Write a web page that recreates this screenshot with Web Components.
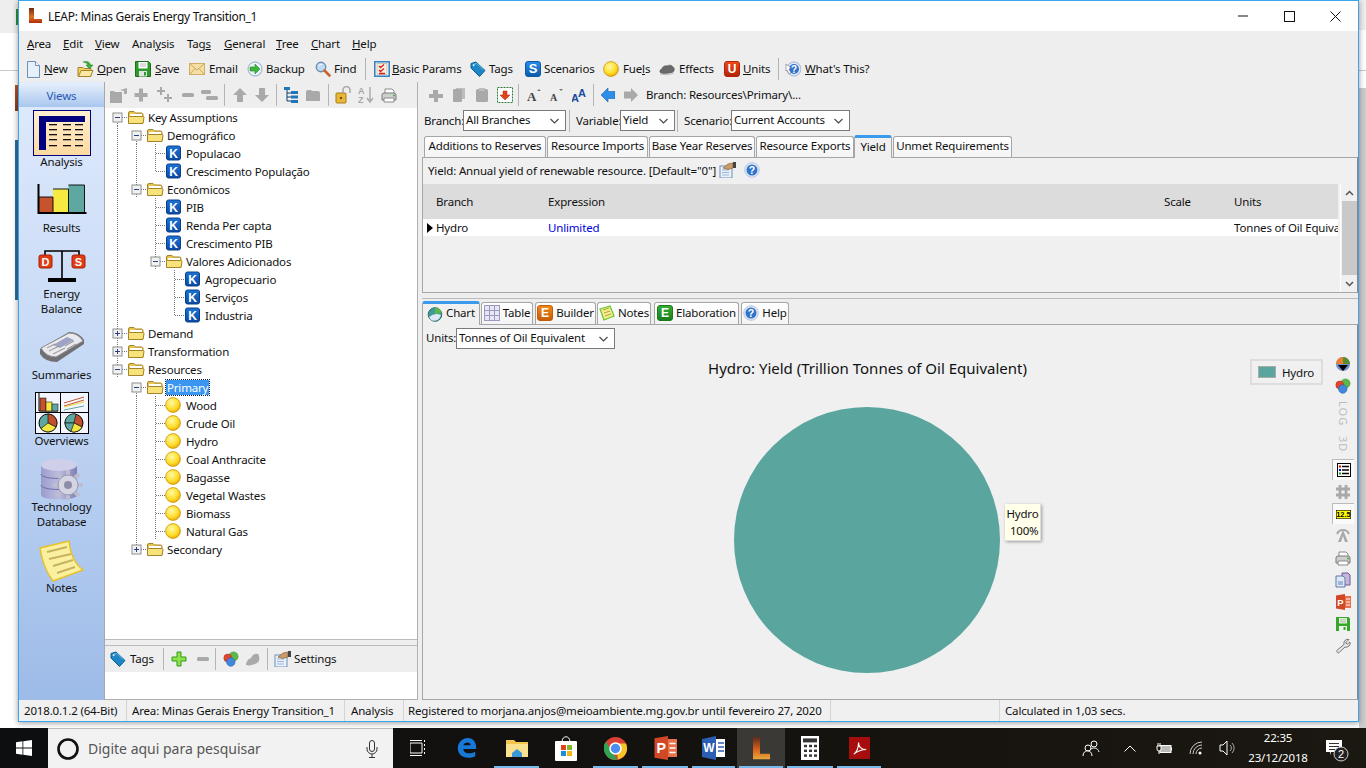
<!DOCTYPE html>
<html lang="en"><head><meta charset="utf-8"><title>LEAP</title>
<style>
html,body{margin:0;padding:0;width:1366px;height:768px;overflow:hidden;background:#fff}
body{font:11.5px/15px "Noto Sans","Open Sans",sans-serif;letter-spacing:-.17px;color:#111;display:flex;flex-direction:column}
</style></head><body>
<desk-area>
<side-strip></side-strip>
<app-window>
  <title-bar>LEAP: Minas Gerais Energy Transition_1</title-bar>
  <menu-bar>
    <m-item w="36"><u>A</u>rea</m-item><m-item w="32"><u>E</u>dit</m-item><m-item w="37"><u>V</u>iew</m-item><m-item w="55">Anal<u>y</u>sis</m-item><m-item w="37">Tag<u>s</u></m-item><m-item w="52"><u>G</u>eneral</m-item><m-item w="35"><u>T</u>ree</m-item><m-item w="41"><u>C</u>hart</m-item><m-item w="40"><u>H</u>elp</m-item>
  </menu-bar>
  <tool-bar pad="6" h="26">
    <t-btn n="new" w="52" g="3"><u>N</u>ew</t-btn><t-btn n="open" w="58" g="3"><u>O</u>pen</t-btn><t-btn n="save" w="54"><u>S</u>ave</t-btn><t-btn n="email" w="58">Email</t-btn><t-btn n="backup" w="68" g="3">Backup</t-btn><t-btn n="find" w="50" g="3">Find</t-btn><t-sep style="margin-right:8px"></t-sep>
    <t-btn n="params" w="96" g="2"><u>B</u>asic Params</t-btn><t-btn n="tag" w="55" g="3">Tags</t-btn><t-btn n="scen" w="78" g="3">Scenarios</t-btn><t-btn n="fuel" w="56">Fue<u>l</u>s</t-btn><t-btn n="cloud" w="65">Effects</t-btn><t-btn n="units" w="54" g="3"><u>U</u>nits</t-btn><t-sep style="margin-right:6px"></t-sep>
    <t-btn n="what" w="100"><u>W</u>hat's This?</t-btn>
  </tool-bar>
  <work-area>
    <views-panel>
      <view-item n="vanalysis" sel t="0" g="-2">Analysis</view-item>
      <view-item n="vresults" t="15" g="6">Results</view-item>
      <view-item n="vbalance" t="13" g="2">Energy<br>Balance</view-item>
      <view-item n="vsummary" t="15" g="4">Summaries</view-item>
      <view-item n="voverview" t="10" g="-1">Overviews</view-item>
      <view-item n="vdb" t="10" g="-2">Technology<br>Database</view-item>
      <view-item n="vnotes" t="11" g="-2">Notes</view-item>
    </views-panel>
    <tree-panel>
      <tool-bar pad="5" h="26" slot="top">
        <x-ic n="gfolderadd" w="23"></x-ic><x-ic n="gplus" w="22"></x-ic><x-ic n="gspark" w="25"></x-ic><x-ic n="gminus" w="21"></x-ic><x-ic n="gminus2" w="23"></x-ic><t-sep style="margin-right:7px"></t-sep>
        <x-ic n="gup" w="22"></x-ic><x-ic n="gdown" w="22"></x-ic><t-sep style="margin-right:7px"></t-sep>
        <x-ic n="btree" w="21"></x-ic><x-ic n="gfolder" w="23"></x-ic><t-sep style="margin-right:6px"></t-sep>
        <x-ic n="lock" w="23"></x-ic><x-ic n="gaz" w="23"></x-ic><x-ic n="print" w="20"></x-ic>
      </tool-bar>
      <tree-row g="m" i="folder">Key Assumptions</tree-row>
      <tree-row g="|m" i="folder">Demográfico</tree-row>
      <tree-row g="||T" i="k">Populacao</tree-row>
      <tree-row g="||L" i="k">Crescimento População</tree-row>
      <tree-row g="|e" i="folder">Econômicos</tree-row>
      <tree-row g="| T" i="k">PIB</tree-row>
      <tree-row g="| T" i="k">Renda Per capta</tree-row>
      <tree-row g="| T" i="k">Crescimento PIB</tree-row>
      <tree-row g="| e" i="folder">Valores Adicionados</tree-row>
      <tree-row g="|  T" i="k">Agropecuario</tree-row>
      <tree-row g="|  T" i="k">Serviços</tree-row>
      <tree-row g="|  L" i="k">Industria</tree-row>
      <tree-row g="p" i="folder">Demand</tree-row>
      <tree-row g="p" i="folder">Transformation</tree-row>
      <tree-row g="e" i="folder">Resources</tree-row>
      <tree-row g=" m" i="folder" sel>Primary</tree-row>
      <tree-row g=" |T" i="fuel">Wood</tree-row>
      <tree-row g=" |T" i="fuel">Crude Oil</tree-row>
      <tree-row g=" |T" i="fuel">Hydro</tree-row>
      <tree-row g=" |T" i="fuel">Coal Anthracite</tree-row>
      <tree-row g=" |T" i="fuel">Bagasse</tree-row>
      <tree-row g=" |T" i="fuel">Vegetal Wastes</tree-row>
      <tree-row g=" |T" i="fuel">Biomass</tree-row>
      <tree-row g=" |T" i="fuel">Natural Gas</tree-row>
      <tree-row g=" P" i="folder">Secondary</tree-row>
      <tool-bar pad="5" h="26" slot="bottom">
        <t-btn n="tag" w="53" g="4">Tags</t-btn><t-sep style="margin-right:7px"></t-sep>
        <x-ic n="plusgreen" w="24"></x-ic><x-ic n="gminus" w="20"></x-ic><t-sep style="margin-right:7px"></t-sep>
        <x-ic n="colors" w="22"></x-ic><x-ic n="gcloud" w="22"></x-ic><t-sep style="margin-right:6px"></t-sep>
        <t-btn n="settings" w="90" g="2">Settings</t-btn>
      </tool-bar>
    </tree-panel>
    <main-panel>
      <tool-bar pad="6" h="26">
        <x-ic n="gpuzzle" w="23"></x-ic><x-ic n="gcopy" w="23"></x-ic><x-ic n="gpaste" w="23"></x-ic><x-ic n="redin" w="21"></x-ic><t-sep style="margin-right:8px"></t-sep>
        <x-ic n="aup" w="22"></x-ic><x-ic n="adown" w="23"></x-ic><x-ic n="aa" w="21"></x-ic><t-sep style="margin-right:7px"></t-sep>
        <x-ic n="back" w="23"></x-ic><x-ic n="fwd" w="22"></x-ic><span style="padding-bottom:2px">Branch: Resources\Primary\...</span>
      </tool-bar>
      <tool-bar pad="2" h="26" style="padding-bottom:1px">
        <f-label w="39">Branch:</f-label><sel-box w="103">All Branches</sel-box><t-sep style="margin:0 6px 0 3px"></t-sep>
        <f-label w="44">Variable:</f-label><sel-box w="55">Yield</sel-box><t-sep style="margin:0 6px 0 2px"></t-sep>
        <f-label w="47">Scenario:</f-label><sel-box w="119">Current Accounts</sel-box>
      </tool-bar>
      <tab-strip h="23" pad="1" th="21">
        <tab-btn w="122">Additions to Reserves</tab-btn><tab-btn w="101">Resource Imports</tab-btn><tab-btn w="106">Base Year Reserves</tab-btn><tab-btn w="98">Resource Exports</tab-btn><tab-btn w="38" on>Yield</tab-btn><tab-btn w="119">Unmet Requirements</tab-btn>
      </tab-strip>
      <tab-page h="136">
        <hint-row>Yield: Annual yield of renewable resource. [Default="0"]<x-ic n="settings" style="margin-left:3px" w="25"></x-ic><x-ic n="what2" w="16"></x-ic></hint-row>
        <data-table></data-table>
      </tab-page>
      <split-bar></split-bar>
      <tab-strip h="25" pad="0" th="22">
        <tab-btn w="58" n="chart" on>Chart</tab-btn><tab-btn w="52" n="table">Table</tab-btn><tab-btn w="61" n="builder" style="margin-left:2px">Builder</tab-btn><tab-btn w="54" n="notes">Notes</tab-btn><tab-btn w="85" n="elab" style="margin-left:3px">Elaboration</tab-btn><tab-btn w="48" n="what2" style="margin-left:2px">Help</tab-btn>
      </tab-strip>
      <tab-page h="376">
        <chart-view></chart-view>
      </tab-page>
    </main-panel>
  </work-area>
  <status-bar>
    <stat-cell w="108" p="5">2018.0.1.2 (64-Bit)</stat-cell>
    <stat-cell w="218" p="5">Area: Minas Gerais Energy Transition_1</stat-cell>
    <stat-cell w="59" p="6">Analysis</stat-cell>
    <stat-cell w="427" p="4">Registered to morjana.anjos@meioambiente.mg.gov.br until fevereiro 27, 2020</stat-cell>
    <stat-cell w="169" p="5"></stat-cell>
    <stat-cell w="340" p="5" last>Calculated in 1,03 secs.</stat-cell>
  </status-bar>
</app-window>
<side-strip right></side-strip>
</desk-area>
<task-bar></task-bar>

<script>
const letter=(a,b,t,fs=11)=>[16,16,`<defs><linearGradient id="lg" x2="0" y2="1"><stop offset="0" stop-color="${a}"/><stop offset="1" stop-color="${b}"/></linearGradient></defs><rect x=".5" y=".5" width="15" height="15" rx="2.5" fill="url(#lg)" stroke="${b}"/><text x="8" y="12.4" text-anchor="middle" font-family="Liberation Sans" font-weight="700" font-size="${fs}" fill="#fff">${t}</text>`];
const gray='#a9a9a9';
const ball=`<defs><radialGradient id="b" cx=".4" cy=".35" r=".7"><stop offset="0" stop-color="#fff9a8"/><stop offset=".6" stop-color="#ffdf2e"/><stop offset="1" stop-color="#eda800"/></radialGradient></defs><circle cx="8" cy="8" r="7.4" fill="url(#b)" stroke="#c8930c" stroke-width=".8"/>`;
const colors=`<circle cx="10.5" cy="5.5" r="4.6" fill="#5cb84a" stroke="#3a8a2c" stroke-width=".5"/><circle cx="4.8" cy="7" r="4" fill="#e0452e" stroke="#b02c18" stroke-width=".5"/><circle cx="7.8" cy="11" r="4.3" fill="#3f88dc" stroke="#2060a8" stroke-width=".5"/>`;
const settings=`<rect x="1" y="4" width="12" height="12" fill="#eaf1fb" stroke="#6c8fb8"/><path d="M3 8h7M3 10.500h7M3 13h7" stroke="#9bb5d6"/><path d="M4 6l5-4 5-1v5l-5 1.500z" fill="#c99a6a" stroke="#8d6238" stroke-width=".7"/><rect x="14" y="0" width="3" height="6" fill="#444"/>`;
const pr=`<path d="M4 2h7l2 2v3H4z" fill="#fff" stroke="#8a8a8a"/><path d="M1 8q0-2 2-2h10q2 0 2 2v5H1z" fill="#cfcfcf" stroke="#7b7b7b"/><path d="M3 11h10v4H3z" fill="#fff" stroke="#8a8a8a"/><circle cx="13" cy="8.500" r=".9" fill="#3a3"/>`;
const pieMini=(x,y)=>`<g transform="translate(${x} ${y})"><circle cx="0" cy="0" r="9" fill="#5fa8a2" stroke="#000"/><path d="M0 0L0-9A9 9 0 0 1 8 4z" fill="#c0502e" stroke="#000" stroke-width=".6"/><path d="M0 0L8 4A9 9 0 0 1-7 5.500z" fill="#f5e642" stroke="#000" stroke-width=".6"/></g>`;
const pieMini2=(x,y)=>`<g transform="translate(${x} ${y})"><circle cx="0" cy="0" r="9" fill="#c0502e" stroke="#000"/><path d="M0 0L2-9A9 9 0 0 0-9 0z" fill="#5fa8a2" stroke="#000" stroke-width=".6"/><path d="M0 0L-9 0A9 9 0 0 0 8 4z" fill="#5fa8a2" stroke="#000" stroke-width=".6"/><path d="M0 0L-3 8.500A9 9 0 0 0 8 4z" fill="#f5e642" stroke="#000" stroke-width=".6"/></g>`;
const IC={
new:[16,18,`<path d="M2.500 1.500h8l4 4v12h-12z" fill="#e6f0fb" stroke="#6f8fb5"/><path d="M10.500 1.500v4h4" fill="#fff" stroke="#6f8fb5"/>`],
open:[17,18,`<path d="M1 7.500h5l1 1h7v8H1z" fill="#f2cf63" stroke="#a5832c"/><path d="M1.500 16.500l2.500-6h12l-2.500 6z" fill="#fae8a2" stroke="#a5832c"/><path d="M6 2c4-1.500 7 0 7.500 3H16l-3.500 4-3.500-4h2c-.5-1.500-2-2.300-5-3z" fill="#3fae3a" stroke="#24801f" stroke-width=".5"/>`],
save:[16,16,`<path d="M.5.500h13l2 2v13H.5z" fill="#2c9b2c" stroke="#1c6e1c"/><rect x="3.500" y="1" width="9" height="6.500" fill="#fff"/><path d="M5 3h6M5 5h6" stroke="#bbb"/><rect x="4" y="10" width="8" height="5.500" fill="#e3e3e3"/><rect x="9" y="11" width="2" height="3.500" fill="#2c9b2c"/>`],
email:[16,16,`<rect x=".5" y="2.500" width="15" height="11" fill="#f6dfa2" stroke="#cfae66"/><path d="M.5 2.500L8 9l7.500-6.500M.5 13.500L6 7.500M15.500 13.500L10 7.500" fill="none" stroke="#c9a860"/>`],
backup:[16,16,`<circle cx="8" cy="8" r="7" fill="#eef3fb" stroke="#8ea9c8"/><circle cx="8" cy="8" r="3.500" fill="#fff" stroke="#c6d3e4"/><path d="M3 6h5V3l5 5-5 5v-3H3z" fill="#3db53a" stroke="#23801f" stroke-width=".5"/>`],
find:[16,16,`<circle cx="6" cy="6" r="4.700" fill="#bcdcf6" stroke="#6f8aa8" stroke-width="1.400"/><path d="M4 4.500a3 3 0 0 1 3-1" stroke="#fff" fill="none"/><path d="M9.500 9.500l5 5" stroke="#c9642a" stroke-width="2.600" stroke-linecap="round"/>`],
params:[16,16,`<rect x=".8" y=".8" width="14.400" height="14.400" fill="#fff" stroke="#2f7dc1" stroke-width="1.500"/><rect x="3" y="2.500" width="10" height="11" fill="#f6f0e0" stroke="#a09070" stroke-width=".5"/><path d="M5 5l1.500 1.500L10 3.500M5 9l1.500 1.500L10 7.500M5 12.500h6" fill="none" stroke="#d42020" stroke-width="1.300"/>`],
tag:[16,16,`<path d="M1 2.500L6 1l9 8.500-5.500 6L1 7z" fill="#1f86c6" stroke="#0f5e90"/><path d="M3 3.500L7 2.500l6 6" fill="none" stroke="#6cc0ee"/><circle cx="3.600" cy="4.300" r="1" fill="#cfeafa"/>`],
scen:letter('#2a8cea','#0c5aa8','S',13),
fuel:[16,16,ball],
cloud:[16,16,`<path d="M2 12c-2-1-1-4 1-4 0-2 3-4 5-3 2-1.500 5-1 6 1 2 1 1.500 4 0 5-1 1-11 2-12 1z" fill="#6a6a6a" stroke="#444" stroke-width=".5"/><path d="M1 13q7 2 14-1" stroke="#bbb" fill="none"/>`],
gcloud:[16,16,`<path d="M1 14c0-3 2-6 5-7 1-3 4-5 7-4 2 3 2 7-1 9-3 2-8 3-11 2z" fill="${gray}"/>`],
units:letter('#f04a1a','#b02408','U',12),
what:[16,16,`<circle cx="9" cy="8" r="7" fill="#dfe9f8" stroke="#9fb4d2"/><circle cx="9" cy="8" r="5" fill="#2f74c8"/><text x="9" y="11.500" text-anchor="middle" font-family="Liberation Sans" font-weight="700" font-size="10" fill="#fff">?</text><path d="M1 3l5 4-2 1 2 4-2 1-2-4-1 1z" fill="#fff" stroke="#556" stroke-width=".5"/>`],
what2:[16,16,`<circle cx="8" cy="8" r="7.300" fill="#dfe9f8" stroke="#b6c6de"/><circle cx="8" cy="8" r="5.500" fill="#2f74c8"/><text x="8" y="11.700" text-anchor="middle" font-family="Liberation Sans" font-weight="700" font-size="10.500" fill="#fff">?</text>`],
settings:[18,16,settings],
gfolderadd:[17,16,`<path d="M0 4h4l1 1h7v11H0z" fill="${gray}"/><path d="M10 3l7-2v6h-3V4z" fill="${gray}"/>`],
gplus:[16,16,`<path d="M6 1.500h4v4.500h4.500v4H10v4.500H6V10H1.500V6H6z" fill="${gray}"/>`],
gspark:[17,16,`<path d="M5 0h2v3h3v2H7v3H5V5H2V3h3zM12 7h2v3h3v2h-3v3h-2v-3H9v-2h3z" fill="${gray}"/>`],
gminus:[16,16,`<rect x="2" y="6" width="12" height="4" rx="1.500" fill="${gray}"/>`],
gminus2:[17,16,`<rect x="0" y="3" width="10" height="4" rx="1.500" fill="${gray}"/><rect x="5" y="9" width="12" height="4" rx="1.500" fill="${gray}"/>`],
gup:[16,16,`<path d="M8 1l7 7h-4v7H5V8H1z" fill="${gray}"/>`],
gdown:[16,16,`<path d="M8 15l7-7h-4V1H5v7H1z" fill="${gray}"/>`],
btree:[15,16,`<path d="M3 2v12M3 6h5M3 10h5M3 14h5" stroke="#14426e"/><rect x="0" y="0" width="6" height="3" fill="#1e78b8"/><rect x="7" y="4" width="7" height="3" fill="#1e78b8"/><rect x="7" y="8.500" width="7" height="3" fill="#1e78b8"/><rect x="7" y="13" width="7" height="3" fill="#1e78b8"/>`],
gfolder:[16,16,`<path d="M1 5q0-2 2-2h3l1 1h6q2 0 2 2v8H1z" fill="${gray}"/>`],
lock:[16,18,`<rect x="1" y="7" width="10" height="10" rx="1" fill="#e8b83a" stroke="#a87a12"/><circle cx="6" cy="12" r="1.300" fill="#7a5608"/><path d="M8 7V4a3.500 3.500 0 0 1 7 0v3" fill="none" stroke="#a7a7a7" stroke-width="1.500"/>`],
gaz:[16,18,`<text x="0" y="8" font-family="Liberation Sans" font-size="9" font-weight="700" fill="${gray}">A</text><text x="0" y="17" font-family="Liberation Sans" font-size="9" font-weight="700" fill="${gray}">Z</text><path d="M12 1v14M9 12l3 4 3-4" fill="none" stroke="${gray}" stroke-width="1.400"/>`],
print:[16,16,pr],
plusgreen:[16,16,`<path d="M6 1h4v5h5v4h-5v5H6v-5H1V6h5z" fill="#8fe04a" stroke="#2f9a1e"/>`],
colors:[16,16,colors],
gpuzzle:[16,16,`<path d="M5 3h5v4h5v4h-5v4H6v-4H1V7h4z" fill="${gray}"/>`],
gcopy:[16,16,`<path d="M5 1h9v11H5z" fill="#bdbdbd"/><path d="M2 3q0-1 1-1h7q1 0 1 1v11q0 1-1 1H3q-1 0-1-1z" fill="${gray}"/>`],
gpaste:[16,16,`<rect x="2" y="2" width="12" height="13" rx="1.500" fill="${gray}"/><rect x="5" y="1" width="6" height="3" fill="#bdbdbd"/>`],
redin:[16,16,`<rect x=".5" y=".5" width="15" height="15" fill="#fff" stroke="#2b7a3a" stroke-dasharray="2 1"/><path d="M6 4h4v4h3l-5 5-5-5h3z" fill="#e2411a" stroke="#a82a0a" stroke-width=".5"/>`],
aup:[14,16,`<text x="0" y="14" font-family="Liberation Serif" font-weight="700" font-size="13" fill="#444">A</text><path d="M10 4l2-2 2 2z" fill="#777"/>`],
adown:[14,16,`<text x="1" y="13.500" font-family="Liberation Serif" font-weight="700" font-size="10" fill="#444">A</text><path d="M10 2l2 2 2-2z" fill="#777"/>`],
aa:[16,16,`<text x="-1" y="15" font-family="Liberation Sans" font-weight="700" font-size="11" fill="#1a4a9c">A</text><text x="6" y="10" font-family="Liberation Sans" font-weight="700" font-size="11" fill="#1a4a9c">A</text>`],
back:[14,14,`<path d="M0 7l7-7v3.500h7v7H7V14z" fill="#2c8ee8" stroke="#1660b0" stroke-width=".6"/>`],
fwd:[14,14,`<path d="M14 7L7 0v3.500H0v7h7V14z" fill="${gray}"/>`],
folder:[18,16,`<path d="M1.500 14V4q0-1.500 1.500-1.500h4L8.500 4h6q1.500 0 1.500 1.500V14z" fill="#e8c54e" stroke="#a3842c"/><rect x="3" y="5" width="12" height="3" fill="#fff"/><path d="M1.500 14.500V8.500q0-1 1-1h13q1.500 0 1.500 1L16 14.500z" fill="#f8e27a" stroke="#a3842c"/>`],
k:[18,16,`<defs><linearGradient id="kg" x2="0" y2="1"><stop offset="0" stop-color="#1a74d8"/><stop offset="1" stop-color="#0a4aa4"/></linearGradient></defs><rect x="1.500" y="1" width="14" height="14" rx="2" fill="url(#kg)" stroke="#0a3f86"/><text x="8.500" y="12.500" text-anchor="middle" font-family="Liberation Sans" font-weight="700" font-size="12" fill="#fff">K</text>`],
chart:[16,16,`<circle cx="8" cy="8.500" r="6.800" fill="#3f9b9b" stroke="#2c6f5e"/><path d="M8 8.500L8 1.700A6.800 6.800 0 0 1 14.500 6.500z" fill="#5cb84a"/><path d="M2 11q6-5 12-2l-2 4q-4 3-8 1z" fill="#dfe8f6"/>`],
table:[16,16,`<rect x=".5" y=".5" width="15" height="15" fill="#e6e6f6" stroke="#9a9abf"/><path d="M5.500 .5v15M10.500 .5v15M.5 5.500h15M.5 10.500h15" stroke="#9a9abf"/>`],
builder:letter('#f28a1c','#c45c05','E',12),
elab:letter('#35b035','#1a7a1a','E',12),
notes:[16,16,`<path d="M1 4l10-3 4 10-10 4z" fill="#f6ec8c" stroke="#62c92c" stroke-width="1.200"/><path d="M4 5l6-2M5 8l6-2M6 11l6-2" stroke="#b3a43e"/>`],
listp:[14,14,`<rect x=".5" y=".5" width="13" height="13" fill="#fff" stroke="#000"/><path d="M5 3.500h7M5 7h7M5 10.500h7" stroke="#000" stroke-width="1.600"/><rect x="2" y="2.500" width="2" height="2" fill="#e00"/><rect x="2" y="6" width="2" height="2" fill="#00e"/><rect x="2" y="9.500" width="2" height="2" fill="#0a0"/>`],
hash:[16,16,`<path d="M5 1v14M11 1v14M1 5h14M1 11h14" stroke="${gray}" stroke-width="2.800"/>`],
y125:[15,9,`<rect x=".3" y=".3" width="14.400" height="8.400" fill="#ffff00" stroke="#000" stroke-width=".6"/><text x="7.500" y="7.300" text-anchor="middle" font-family="Liberation Sans" font-weight="700" font-size="7.500" letter-spacing="0" fill="#000">12.5</text>`],
atree:[16,16,`<path d="M8 3l5 12h-3L8 9l-2 6H3z" fill="${gray}"/><path d="M2 7a6.500 6.500 0 0 1 12 0" fill="none" stroke="${gray}" stroke-width="2"/>`],
pie:[16,16,`<circle cx="8" cy="7" r="7" fill="#6f8fd0"/><path d="M8 7V0a7 7 0 0 1 7 7z" fill="#5a8a2e"/><path d="M8 7V0a7 7 0 0 0-7 7z" fill="#e8802c"/><path d="M3 8h10l-5 6z" fill="#000"/>`],
copy2:[16,16,`<path d="M7 1h6l2 2v10H7z" fill="#c6b6da" stroke="#6e5a96"/><path d="M1 4h7l2 2v9H1z" fill="#dfe8f6" stroke="#5e78a6"/><rect x="3" y="9" width="5" height="4" fill="#9fb6d8"/>`],
ppt:[16,16,`<path d="M1 1.500l9-1.500v16l-9-1.500z" fill="#d24726"/><rect x="10" y="2" width="6" height="12" fill="#e8704a"/><path d="M11 5h4M11 8h4M11 11h4" stroke="#fff"/><text x="5.500" y="11.500" text-anchor="middle" font-family="Liberation Sans" font-weight="700" font-size="9.500" fill="#fff">P</text>`],
save2:[14,14,`<path d="M0 0h12.500L14 1.500V14H0z" fill="#35a82a"/><rect x="3" y="1" width="8" height="5.500" fill="#e8efe2"/><path d="M4 2.800h6M4 4.800h6" stroke="#9ab890" stroke-width=".8"/><rect x="3" y="9" width="8" height="5" fill="#f2f2f2"/><rect x="7.500" y="10" width="2" height="3" fill="#35a82a"/>`],
wrench:[16,16,`<path d="M14 1.500a4 4 0 0 0-5 5L1.800 12.500a1.700 1.700 0 0 0 2 2.300L10 9a4 4 0 0 0 5-5l-2.500 2-2-1z" fill="#e8e8e8" stroke="#777"/>`],
vanalysis:[58,46,`<defs><linearGradient id="t" x2="0" y2="1"><stop offset="0" stop-color="#fff0d2"/><stop offset="1" stop-color="#fdd9a0"/></linearGradient></defs><rect x=".5" y=".5" width="57" height="45" fill="url(#t)" stroke="#000080"/><path d="M6 6h46v6H13v28H6z" fill="#000080"/>${[14,19,24,29,35].map(y=>[16,30,42].map(x=>`<rect x="${x}" y="${y}" width="8" height="1.300" fill="#111"/>`).join('')).join('')}`],
vresults:[50,30,`<rect x="2" y="13" width="14" height="15" fill="#c4532e"/><rect x="16" y="5" width="15.500" height="23" fill="#f6e942"/><rect x="31.500" y="1" width="16" height="27" fill="#5fa8a2"/><path d="M2 13h14v15M16 5h15.500v23M31.500 1h16v27" fill="none" stroke="#000" stroke-width=".9"/><path d="M1.500 0v29h48" fill="none" stroke="#000" stroke-width="2"/>`],
vbalance:[48,36,`<path d="M7 8V3h34v5M24 3v29" fill="none" stroke="#000" stroke-width="1.600"/><rect x="10" y="30" width="28" height="4" fill="#000"/><rect x="1" y="7" width="13" height="13" rx="2" fill="#e13a14" stroke="#a32208"/><rect x="34" y="7" width="13" height="13" rx="2" fill="#e13a14" stroke="#a32208"/><text x="7.500" y="17.500" text-anchor="middle" font-family="Liberation Sans" font-weight="700" font-size="11" fill="#fff">D</text><text x="40.500" y="17.500" text-anchor="middle" font-family="Liberation Sans" font-weight="700" font-size="11" fill="#fff">S</text>`],
vsummary:[46,32,`<path d="M1 18L30 1q10 0 15 8v4L18 31Q6 31 1 23z" fill="#6f6f74"/><path d="M2 17L30 2q9 0 14 8L17 26Q7 26 2 17z" fill="#e9e9ee" stroke="#8a8a90"/><path d="M14 14l14-8 7 3-14 8z" fill="#9ea3c6"/><path d="M8 17l8-4M10 20l10-5M14 23l12-6M26 15l9-5M28 18l9-5" stroke="#8f8f8f"/>`],
voverview:[54,42,`<rect x=".5" y=".5" width="53" height="41" fill="#f4f6ff" stroke="#000"/><path d="M25.500 0v42M0 20.500h54" stroke="#000" stroke-width="1"/><path d="M4 1v18h19" fill="none" stroke="#000"/><rect x="5" y="6" width="6" height="13" fill="#c4532e" stroke="#000" stroke-width=".5"/><rect x="11" y="10" width="6" height="9" fill="#f6e942" stroke="#000" stroke-width=".5"/><rect x="17" y="12" width="6" height="7" fill="#5fa8a2" stroke="#000" stroke-width=".5"/><path d="M29 11l20-6M29 14l20-6" stroke="#c4532e"/><path d="M29 15l20-5" stroke="#e8d93a"/><path d="M29 18l20-4" stroke="#5fa8a2"/>${pieMini(13,31)}${pieMini2(39,31)}`],
vdb:[44,43,`<defs><linearGradient id="d" x2="1" y2="0"><stop offset="0" stop-color="#9c9ccc"/><stop offset=".5" stop-color="#bcbce0"/><stop offset="1" stop-color="#7f7fb6"/></linearGradient></defs><path d="M1 7v30c0 6 36 6 36 0V7z" fill="url(#d)"/><ellipse cx="19" cy="7" rx="18" ry="6" fill="#cfcfea"/><path d="M1 16c0 6 36 6 36 0M1 27c0 6 36 6 36 0" fill="none" stroke="#6d6da6"/><path d="M28 12v6M28 36v6M13 27h6M37 27h6M17 16l4 4M35 34l4 4M17 38l4-4M35 20l4-4" stroke="#bdbdd0" stroke-width="4"/><circle cx="28" cy="27" r="10" fill="#d4d4e2" stroke="#9a9ab4"/><circle cx="28" cy="27" r="4" fill="#8d8da8"/>`],
vnotes:[46,42,`<path d="M1 8L30 1q2 20 14 29L14 41Q4 28 1 8z" fill="#fbf0a0" stroke="#e8c020" stroke-width="1.400"/><path d="M8 12l20-5M10 19l22-5M14 26l20-6M18 33l18-6" stroke="#c6b35e" stroke-width="2"/>`],
};
function def(tag,css,html,init){
  const t=document.createElement('template');
  t.innerHTML=`<style>${css}</style>${html}`;
  customElements.define(tag,class extends HTMLElement{
    constructor(){super();this.attachShadow({mode:'open'}).appendChild(t.content.cloneNode(true));}
    connectedCallback(){if(init&&!this._i){this._i=1;init.call(this,this.shadowRoot);}}
  });
}
const svgOf=(n,s=1)=>{const [w,h,b]=IC[n];return `<svg xmlns="http://www.w3.org/2000/svg" width="${w*s}" height="${h*s}" viewBox="0 0 ${w} ${h}" style="display:block;flex:none;letter-spacing:0">${b}</svg>`;};
const wAttr=(el)=>{if(el.hasAttribute('w'))el.style.width=el.getAttribute('w')+'px';};

def('x-ic',`:host{display:inline-flex;align-items:center;flex:none}`,`<span id="s"></span>`,function(r){wAttr(this);r.getElementById('s').innerHTML=svgOf(this.getAttribute('n'));});
def('desk-area',`:host{display:flex;height:728px;flex:none}`,`<slot></slot>`);
def('side-strip',`:host{display:block;width:18px;flex:none;background-color:#fff;background-repeat:no-repeat;
  background-image:linear-gradient(#2f8f3f,#2f8f3f),linear-gradient(#b8562a,#8a3a20),linear-gradient(#2f6f9f,#2f6f9f),linear-gradient(#c9c9c9,#c9c9c9),linear-gradient(#eee,#eee);
  background-size:2px 16px,3px 26px,3px 160px,18px 1px,18px 33px;background-position:16px 9px,15px 85px,15px 140px,0 70px,0 0}
  :host([right]){width:7px;background-image:linear-gradient(#ccc,#ccc),linear-gradient(#c9c9c9,#c9c9c9),linear-gradient(#eee,#eee);background-size:7px 640px,7px 1px,7px 30px;background-position:0 88px,0 70px,0 0}`,``);
def('app-window',`:host{display:flex;flex-direction:column;width:1341px;height:722px;box-sizing:border-box;border:1px solid #3aa5ee;background:#eee;flex:none;box-shadow:0 1px 6px rgba(0,0,0,.4);position:relative}`,`<slot></slot>`);
def('title-bar',`:host{display:flex;align-items:center;height:30px;background:#fff;flex:none;padding-left:9px;color:#111;font-size:12px;letter-spacing:-.3px}
  .c{margin-left:auto;display:flex}.c svg{display:block}.b{width:46px;height:30px;display:flex;align-items:center;justify-content:center}
  #l{margin-right:6px}`,`<svg id="l" width="14" height="16" viewBox="0 0 14 16"><defs><linearGradient id="f" x2="0" y2="1"><stop offset="0" stop-color="#6e2a18"/><stop offset=".6" stop-color="#e0701c"/><stop offset="1" stop-color="#b02a10"/></linearGradient></defs><path d="M1 0h5v11h8v4H1z" fill="url(#f)"/></svg><slot></slot><div class="c"><div class="b"><svg width="10" height="2"><rect width="10" height="1" y="0.500" fill="#111"/></svg></div><div class="b"><svg width="11" height="11"><rect x=".5" y=".5" width="10" height="10" fill="none" stroke="#111"/></svg></div><div class="b"><svg width="11" height="11"><path d="M.5.500l10 10M10.500.5l-10 10" stroke="#111"/></svg></div></div>`);
def('menu-bar',`:host{display:flex;align-items:center;height:25px;padding-left:8px;flex:none;background:#eee}`,`<slot></slot>`);
def('m-item',`:host{display:block;flex:none;white-space:nowrap}`,`<slot></slot>`,function(){wAttr(this);});
def('tool-bar',`:host{display:flex;align-items:center;flex:none;background:#eee;box-sizing:border-box;white-space:nowrap}`,`<slot></slot>`,function(){this.style.height=this.getAttribute('h')+'px';this.style.paddingLeft=this.getAttribute('pad')+'px';});
def('t-btn',`:host{display:flex;align-items:center;gap:4px;flex:none;white-space:nowrap}.x{padding-bottom:2px}`,`<span id="s"></span><span class="x"><slot></slot></span>`,function(r){wAttr(this);if(this.hasAttribute('g'))this.style.gap=this.getAttribute('g')+'px';r.getElementById('s').innerHTML=svgOf(this.getAttribute('n'));});
def('t-sep',`:host{display:block;width:1px;height:22px;background:#b4b4b4;flex:none}`,``);
def('work-area',`:host{display:flex;height:618px;flex:none}`,`<slot></slot>`);
def('views-panel',`:host{display:block;width:85px;flex:none;border-right:1px solid #a8a8a8;background:linear-gradient(#dfeafc,#c6d9f5 45%,#9dbbe8);box-sizing:content-box}
  .h{height:24px;background:linear-gradient(#e6effc,#a9c6ee);color:#2a58b4;display:flex;align-items:center;justify-content:center;margin-top:1px;margin-bottom:3px}`,`<div class="h">Views</div><slot></slot>`);
def('view-item',`:host{display:flex;flex-direction:column;align-items:center;text-align:center;color:#111}`,`<span id="s"></span><span id="t"><slot></slot></span>`,function(r){this.style.marginTop=this.getAttribute('t')+'px';r.getElementById('t').style.marginTop=this.getAttribute('g')+'px';r.getElementById('t').style.position='relative';r.getElementById('s').innerHTML=svgOf(this.getAttribute('n'));});
def('tree-panel',`:host{display:flex;flex-direction:column;width:312px;flex:none;background:#fff;border-right:1px solid #b0b0b0;margin-right:4px;border-bottom:1px solid #b0b0b0;height:617px}
  .t{flex:1;padding-top:0;overflow:hidden;min-height:0}.l{height:5px;background:#eee;border-top:1px solid #bbb;border-bottom:1px solid #bbb;flex:none}.w{height:27px;flex:none;background:#fff}`,
  `<slot name="top"></slot><div class="t"><slot></slot></div><div class="l"></div><slot name="bottom"></slot><div class="w"></div>`);
def('tree-row',`:host{display:flex;align-items:center;height:18px;padding-left:3px;white-space:nowrap}
  svg{display:block;flex:none}.i{margin-right:2px;width:18px;flex:none}.n{padding:0 1px;line-height:15px}
  :host([sel]) .n{background:#3a96f0;color:#fff;outline:1px dotted #124}`,
  `<span id="c" style="display:flex"></span><span class="i" id="i"></span><span class="n"><slot></slot></span>`,function(r){
    const dot='stroke="#777" stroke-dasharray="1 1"';
    const cell=ch=>{
      let v='';
      if('|T'.includes(ch))v=`<path d="M9.500 0v18" ${dot}/>`;
      if(ch==='L')v=`<path d="M9.500 0v9" ${dot}/>`;
      if('TL'.includes(ch))v+=`<path d="M10 9.500h9" ${dot}/>`;
      if('mpeP'.includes(ch)){
        if('pe'.includes(ch))v=`<path d="M9.500 0v18" ${dot}/>`;
        if(ch==='m')v=`<path d="M9.500 9v9" ${dot}/>`;
        if(ch==='P')v=`<path d="M9.500 0v9" ${dot}/>`;
        const plus='pP'.includes(ch);
        v+=`<path d="M14 9.500h5" ${dot}/><rect x="5" y="5" width="9" height="9" fill="#f1f1f1" stroke="#8e8e8e"/><path d="M7 9.500h5" stroke="#2a3f8a"/>`+(plus?`<path d="M9.500 7v5" stroke="#2a3f8a"/>`:'');
      }
      return `<svg width="19" height="18">${v}</svg>`;
    };
    r.getElementById('c').innerHTML=[...this.getAttribute('g')].map(cell).join('');
    r.getElementById('i').innerHTML=svgOf(this.getAttribute('i'));
  });
def('main-panel',`:host{display:flex;flex-direction:column;flex:1;min-width:0}`,`<slot></slot>`);
def('f-label',`:host{display:block;flex:none;white-space:nowrap}`,`<slot></slot>`,function(){wAttr(this);});
def('sel-box',`:host{display:flex;align-items:center;justify-content:space-between;height:21px;box-sizing:border-box;border:1px solid #7a7a7a;background:#fff;padding:0 6px 0 2px;flex:none;white-space:nowrap;overflow:hidden}.x{padding-bottom:3px}`,`<span class="x"><slot></slot></span><svg width="9" height="6"><path d="M.5 1L4.500 5l4-4" fill="none" stroke="#444" stroke-width="1.100"/></svg>`,function(){wAttr(this);});
def('tab-strip',`:host{display:flex;align-items:flex-end;flex:none;box-sizing:border-box;position:relative;z-index:1;white-space:nowrap}`,`<slot></slot>`,function(){this.style.height=this.getAttribute('h')+'px';this.style.paddingLeft=this.getAttribute('pad')+'px';this.style.setProperty('--th',this.getAttribute('th')+'px');});
def('tab-btn',`:host{display:flex;align-items:center;justify-content:center;gap:3px;height:var(--th,21px);box-sizing:border-box;border:1px solid #a6a6a6;border-bottom:none;border-radius:3px 3px 0 0;background:linear-gradient(#fff,#f4f4f4);flex:none;white-space:nowrap;overflow:hidden;margin-left:1px;padding-bottom:1px}
  :host([on]){height:calc(var(--th,21px) + 2px);margin-bottom:-1px;margin-left:0;background:#f0f0f0;border-top:3px solid #3a9bec;border-color:#3a9bec #a6a6a6 transparent;padding-bottom:2px}
  .x{padding-bottom:2px}#s:empty{display:none}`,`<span id="s"></span><span class="x"><slot></slot></span>`,function(r){wAttr(this);if(this.hasAttribute('n'))r.getElementById('s').innerHTML=svgOf(this.getAttribute('n'));});
def('tab-page',`:host{display:flex;flex-direction:column;box-sizing:border-box;border:1px solid #a6a6a6;border-right-color:#888;background:#f0f0f0;flex:none;position:relative}`,`<slot></slot>`,function(){this.style.height=this.getAttribute('h')+'px';});
def('hint-row',`:host{display:flex;align-items:center;height:26px;padding:0 0 2px 5px;box-sizing:border-box;flex:none;white-space:nowrap}`,`<slot></slot>`);
def('split-bar',`:host{display:block;height:5px;flex:none;border-bottom:1px solid #bbb;background:#eee}`,``);
def('data-table',`:host{display:flex;flex:1;min-height:0}
  .t{width:915px;overflow:hidden;flex:none}.r{display:grid;grid-template-columns:13px 112px 616px 70px 200px;white-space:nowrap;align-items:center}
  .h{height:35px;background:#dcdcdc}.b{height:17px;background:#fff}.blue{color:#0000dd}
  .m{width:0;height:0;border:5px solid transparent;border-left:6px solid #000;border-right:0;margin-left:4px}
  .s{width:16px;margin-left:2px;display:flex;flex-direction:column;align-items:center;background:#f0f0f0;border-left:1px solid #fff}
  .a{height:17px;display:flex;align-items:center;justify-content:center;flex:none}.th{flex:1;width:15px;background:#c9c9c9;margin-bottom:17px}
  .a svg{display:block}`,
  `<div class="t"><div class="r h"><span></span><span>Branch</span><span>Expression</span><span>Scale</span><span>Units</span></div>
  <div class="r b"><span class="m"></span><span>Hydro</span><span class="blue">Unlimited</span><span></span><span>Tonnes of Oil Equivalent</span></div></div>
  <div class="s"><div class="a"><svg width="9" height="6"><path d="M1 5l3.500-3.500L8 5" fill="none" stroke="#555" stroke-width="1.500"/></svg></div><div class="th"></div><div class="a" style="margin-top:-17px"><svg width="9" height="6"><path d="M1 1l3.500 3.500L8 1" fill="none" stroke="#555" stroke-width="1.500"/></svg></div></div>`);
def('chart-view',`:host{display:flex;flex-direction:column;height:100%}
  .u{display:flex;align-items:center;height:24px;padding-left:3px;flex:none;white-space:nowrap;padding-top:3px;box-sizing:border-box;margin-bottom:1px}
  .m{display:flex;flex:1;min-height:0;align-items:flex-start}
  .a{position:relative;width:909px;flex:none;box-sizing:border-box;padding-right:22px;display:flex;flex-direction:column;align-items:center}
  .ti{font-size:15px;line-height:20px;margin-top:8px;white-space:nowrap;letter-spacing:0;padding-left:2px}
  .p{position:relative;width:266px;height:266px;margin-top:29px;flex:none}
  .c{width:266px;height:266px;border-radius:50%;background:#5ba59f}
  .tip{position:absolute;left:271px;top:97px;width:36px;height:37px;box-sizing:border-box;background:#ffffea;border-right:1px solid #ddd;border-bottom:1px solid #ddd;box-shadow:1px 1px 3px rgba(0,0,0,.35);text-align:right;padding:1px 1px 0 0;line-height:17px}
  .lg{position:absolute;left:827px;top:9px;width:73px;height:26px;box-sizing:border-box;border:2px solid #ddd;background:#f0f0f0;display:flex;align-items:center;gap:6px;padding-left:6px}
  .sw{width:18px;height:12px;background:#5ba59f;border:1px solid #aaa;box-sizing:border-box}
  .i{width:22px;flex:none;display:flex;flex-direction:column;align-items:center;padding-top:4px}`,
  `<div class="u"><span style="width:30px;padding-bottom:2px">Units:</span><sel-box w="159">Tonnes of Oil Equivalent</sel-box></div>
  <div class="m"><div class="a"><div class="ti">Hydro: Yield (Trillion Tonnes of Oil Equivalent)</div>
    <div class="p"><div class="c"></div><div class="tip">Hydro<br>100%</div></div>
    <div class="lg"><span class="sw"></span><span>Hydro</span></div></div>
    <div class="i">
      <side-cell n="pie" h="21"></side-cell><side-cell n="colors" h="21"></side-cell><side-cell t="LOG" h="36"></side-cell><side-cell t="3D" h="24"></side-cell><div style="height:3px"></div>
      <side-cell n="listp" h="21" on></side-cell><side-cell n="hash" h="23"></side-cell><side-cell n="y125" h="21" on></side-cell><side-cell n="atree" h="22"></side-cell><side-cell n="print" h="23"></side-cell><side-cell n="copy2" h="22"></side-cell><side-cell n="ppt" h="22"></side-cell><side-cell n="save2" h="22"></side-cell><side-cell n="wrench" h="22"></side-cell>
    </div></div>`);
def('side-cell',`:host{display:flex;align-items:center;justify-content:center;width:22px;flex:none;box-sizing:border-box;color:#bdbdbd;font-size:11px}
  #s.v{writing-mode:vertical-rl;letter-spacing:1px}
  :host([on]){background:#fafafa;border:1px solid #bbb;border-right:none;border-bottom:none}`,`<span id="s"></span>`,function(r){this.style.height=this.getAttribute('h')+'px';const s=r.getElementById('s');if(this.hasAttribute('t')){s.className='v';s.textContent=this.getAttribute('t');}else s.innerHTML=svgOf(this.getAttribute('n'));});
def('status-bar',`:host{display:flex;height:21px;flex:none;background:#f0f0f0;border-top:0;align-items:stretch}`,`<slot></slot>`);
def('stat-cell',`:host{display:flex;align-items:center;flex:none;box-sizing:border-box;border-right:1px solid #d4d4d4;white-space:nowrap}:host([last]){border-right:none}`,`<slot></slot>`,function(){wAttr(this);this.style.paddingLeft=this.getAttribute('p')+'px';});
def('task-bar',`:host{display:flex;align-items:center;height:40px;flex:none;background:linear-gradient(90deg,#0d0e10,#17140f 70%,#1b1812);color:#fff;position:relative}
  .st{width:48px;height:40px;display:flex;align-items:center;justify-content:center;flex:none}
  .se{width:345px;height:40px;background:#f2f2f2;color:#555;font-size:14px;letter-spacing:0;display:flex;align-items:center;flex:none;box-sizing:border-box;padding-left:9px;border-top:1px solid #bbb}
  .se span{margin-left:9px;flex:1}.se svg{display:block}
  .apps{display:flex;margin-left:0}.app{height:40px;display:flex;align-items:center;justify-content:center;position:relative;flex:none}
  .u{position:absolute;left:2px;right:2px;bottom:0;height:2px;background:#76b9ed}
  .act{background:#3a3936}
  .tray{display:flex;align-items:center;margin-left:auto;height:40px}
  .ck{text-align:center;line-height:20px;font-size:11.5px;width:72px}`,
  `<div class="st"><svg width="16" height="16" viewBox="0 0 16 16"><path d="M0 2.200l6.500-.9v6.300H0zM7.300 1.200L16 0v7.600H7.300zM0 8.400h6.500v6.300L0 13.800zM7.300 8.400H16V16l-8.700-1.200z" fill="#fff"/></svg></div>
  <div class="se"><svg width="22" height="22" viewBox="0 0 22 22"><circle cx="11" cy="11" r="9.500" fill="none" stroke="#111" stroke-width="2.600"/></svg><span>Digite aqui para pesquisar</span><svg width="12" height="18" viewBox="0 0 12 18" style="margin-right:15px"><rect x="3.500" y=".5" width="5" height="11" rx="2.500" fill="none" stroke="#333"/><path d="M1 7v2a5 5 0 0 0 10 0V7M6 14v3M3 17.500h6" fill="none" stroke="#333"/></svg></div>
  <div class="apps">
   <div class="app" style="width:49px"><svg width="16" height="16" viewBox="0 0 16 16"><path d="M0 3h12v10H0zM14.500 0v2M14.500 4v2M14.500 8v2M14.500 12v2M0 .5h12M0 15.500h12" fill="none" stroke="#fff"/></svg></div>
   <div class="app" style="width:50px"><svg width="20" height="22" viewBox="0 0 22 24"><path d="M1 14C0 5 7 1 12 1c6 0 9 5 9 10v2H7c0 5 7 6 13 3v5c-8 4-18 1-19-7zM7 9h8c0-4-7-4-8 0z" fill="#1679d8"/></svg></div>
   <div class="app" style="width:49px"><svg width="22" height="20" viewBox="0 0 22 20"><path d="M0 2h8l2 2h12v15H0z" fill="#f3c74d"/><path d="M0 6h22v13H0z" fill="#fae18f"/><path d="M6 19v-4l5-4 5 4v4z" fill="#3a96d8"/></svg><i class="u"></i></div>
   <div class="app" style="width:50px"><svg width="22" height="25" viewBox="0 0 22 25"><path d="M7 6c0-7 8-7 8 0" fill="none" stroke="#fff"/><rect y="5" width="22" height="20" rx="1" fill="#fff"/><rect x="6" y="9" width="5" height="5" fill="#e2411a"/><rect x="12" y="9" width="5" height="5" fill="#7db928"/><rect x="6" y="15" width="5" height="5" fill="#1a8fdc"/><rect x="12" y="15" width="5" height="5" fill="#f4b512"/></svg></div>
   <div class="app" style="width:49px"><svg width="23" height="23" viewBox="0 0 23 23"><circle cx="11.500" cy="11.500" r="11.500" fill="#dc4034"/><path d="M11.500 6.500H22a11.500 11.500 0 0 1-8 16z" fill="#f6c525"/><path d="M2 4.500l5.500 10 6 8A11.500 11.500 0 0 1 2 4.500z" fill="#30a350"/><circle cx="11.500" cy="11.500" r="5.500" fill="#4a8ff0" stroke="#fff" stroke-width="1.500"/></svg><i class="u"></i></div>
   <div class="app" style="width:50px"><svg width="24" height="24" viewBox="0 0 16 16" style="letter-spacing:0">${IC.ppt[2]}</svg><i class="u"></i></div>
   <div class="app" style="width:47px"><svg width="24" height="24" viewBox="0 0 24 24" style="letter-spacing:0"><path d="M0 3L14 0v24L0 21z" fill="#2b5fb3"/><rect x="14" y="3" width="9" height="18" fill="#fff"/><path d="M16 7h6M16 11h6M16 15h6" stroke="#2b5fb3" stroke-width="1.500"/><text x="7" y="16" text-anchor="middle" font-family="Liberation Sans" font-weight="700" font-size="12" fill="#fff">W</text></svg><i class="u"></i></div>
   <div class="app act" style="width:48px"><svg width="18" height="23" viewBox="0 0 18 30" preserveAspectRatio="none"><defs><linearGradient id="g" x2="0" y2="1"><stop offset="0" stop-color="#5a2a20"/><stop offset=".55" stop-color="#d8601c"/><stop offset="1" stop-color="#e8a83a"/></linearGradient></defs><path d="M1 0h7v22h10v7H1z" fill="url(#g)"/></svg><i class="u"></i></div>
   <div class="app" style="width:50px"><svg width="18" height="24" viewBox="0 0 18 30" preserveAspectRatio="none"><rect width="18" height="30" fill="#fff"/><rect x="2" y="3" width="14" height="5" fill="#333"/><g fill="#333"><rect x="3" y="11" width="3" height="3"/><rect x="8" y="11" width="3" height="3"/><rect x="13" y="11" width="3" height="3"/><rect x="3" y="17" width="3" height="3"/><rect x="8" y="17" width="3" height="3"/><rect x="13" y="17" width="3" height="3"/><rect x="3" y="23" width="3" height="3"/><rect x="8" y="23" width="3" height="3"/><rect x="13" y="23" width="3" height="3"/></g></svg><i class="u"></i></div>
   <div class="app" style="width:48px"><svg width="21" height="22" viewBox="0 0 22 28" preserveAspectRatio="none"><rect width="22" height="28" fill="#a80d0d"/><path d="M5 22c3-3 5-9 5-15 0 6 3 9 8 9-5 0-9 2-13 6z" fill="none" stroke="#fff" stroke-width="1.200"/></svg><i class="u"></i></div>
  </div>
  <div class="tray">
   <svg width="18" height="18" viewBox="0 0 18 18" style="margin-right:24px"><circle cx="6" cy="9" r="3" fill="none" stroke="#fff"/><circle cx="12" cy="5" r="3" fill="none" stroke="#fff"/><path d="M1 17c0-7 9-7 9 0M9 10c3-2 7-1 8 3" fill="none" stroke="#fff"/></svg>
   <svg width="12" height="7" viewBox="0 0 12 7" style="margin-right:20px"><path d="M.5 6.500L6 1l5.500 5.500" fill="none" stroke="#fff"/></svg>
   <svg width="16" height="14" viewBox="0 0 16 14" style="margin-right:17px"><rect x="4" y="4.500" width="11" height="7" fill="#bbb" stroke="#fff"/><rect x="15" y="6.500" width="1" height="3" fill="#fff"/><path d="M1 5h4v3a2 2 0 0 1-4 0zM2 2v3M4 2v3M3 10v3" fill="#1a1712" stroke="#fff"/></svg>
   <svg width="16" height="14" viewBox="0 0 16 14" style="margin-right:14px"><path d="M1 13a12 12 0 0 1 12-12M4 13a9 9 0 0 1 9-9M7 13a6 6 0 0 1 6-6" fill="none" stroke="#ccc"/><circle cx="11" cy="12" r="1.500" fill="#fff"/></svg>
   <svg width="16" height="16" viewBox="0 0 16 16" style="margin-right:7px"><path d="M1 5h3l4-4v14l-4-4H1z" fill="none" stroke="#fff"/><path d="M11 5a4 4 0 0 1 0 6M13 3a7 7 0 0 1 0 10" fill="none" stroke="#aaa"/></svg>
   <div class="ck">22:35<br>23/12/2018</div>
   <svg width="18" height="18" viewBox="0 0 18 18" style="margin:0 0 0 12px;overflow:visible;letter-spacing:0"><path d="M0 1h16v12H5l-1 3v-3H0z" fill="#fff"/><path d="M3 4.500h10M3 7.500h10M3 10.500h6" stroke="#333"/><circle cx="15" cy="15" r="7" fill="#222" stroke="#ccc"/><text x="15" y="19" text-anchor="middle" font-family="Liberation Sans" font-size="11" fill="#fff">2</text></svg>
   <div style="width:22px"></div>
  </div>`);
</script>
</body></html>
